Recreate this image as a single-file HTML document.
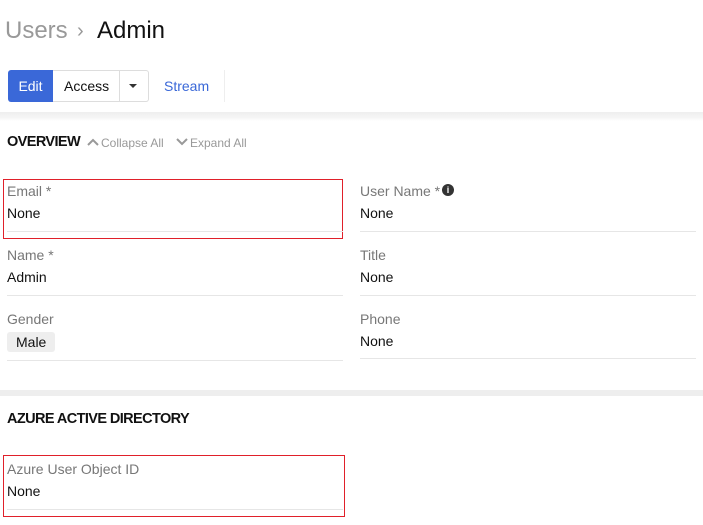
<!DOCTYPE html>
<html><head><meta charset="utf-8"><style>
*{margin:0;padding:0;box-sizing:border-box}
body{width:703px;height:525px;overflow:hidden;background:#fff;font-family:"Liberation Sans",sans-serif;position:relative;color:#111}
.a{position:absolute;white-space:nowrap}
.lbl{font-size:14px;color:#777}
.val{font-size:14px;color:#111}
.hr{position:absolute;height:1px;background:#e6e6e6}
.red{position:absolute;border:1px solid #e0202a}
.h{font-size:14px;font-weight:bold;letter-spacing:-0.6px;color:#111}
</style></head><body>
<div class="a" style="left:5px;top:17px;font-size:24px;color:#999">Users</div>
<div class="a" style="left:77px;top:20px;font-size:20px;color:#999">›</div>
<div class="a" style="left:97px;top:17px;font-size:24px;color:#111">Admin</div>

<div class="a" style="left:8px;top:70px;width:45px;height:32px;background:#3a68d8;border-radius:3px 0 0 3px;color:#fff;font-size:14px;line-height:32px;text-align:center">Edit</div>
<div class="a" style="left:53px;top:70px;width:96px;height:32px;border:1px solid #ddd;border-left:none;border-radius:0 3px 3px 0"></div>
<div class="a" style="left:119px;top:70px;width:1px;height:32px;background:#ddd"></div>
<div class="a" style="left:64px;top:70px;font-size:14px;line-height:32px">Access</div>
<div class="a" style="left:129px;top:84px;width:0;height:0;border-left:4px solid transparent;border-right:4px solid transparent;border-top:4px solid #333"></div>
<div class="a" style="left:164px;top:70px;font-size:14px;line-height:32px;color:#3a68d8">Stream</div>
<div class="a" style="left:224px;top:70px;width:1px;height:32px;background:#eee"></div>

<div class="a" style="left:0;top:112px;width:703px;height:9px;background:linear-gradient(#eee,#f5f5f5 60%,#fff)"></div>

<div class="a h" style="left:7px;top:134px;font-size:14.5px">OVERVIEW</div>
<svg class="a" style="left:87px;top:138px" width="12" height="8" viewBox="0 0 12 8"><path d="M1 7 L6 2 L11 7" fill="none" stroke="#999" stroke-width="2"/></svg>
<div class="a" style="left:101px;top:136px;font-size:12px;color:#999">Collapse All</div>
<svg class="a" style="left:176px;top:138px" width="12" height="8" viewBox="0 0 12 8"><path d="M1 1 L6 6 L11 1" fill="none" stroke="#999" stroke-width="2"/></svg>
<div class="a" style="left:190px;top:136px;font-size:12px;color:#999">Expand All</div>

<div class="red" style="left:3px;top:179px;width:340px;height:60px"></div>
<div class="a lbl" style="left:7px;top:183px">Email *</div>
<div class="a val" style="left:7px;top:205px">None</div>
<div class="hr" style="left:7px;top:231px;width:336px"></div>

<div class="a lbl" style="left:360px;top:183px">User Name *</div>
<div class="a" style="left:442px;top:184px;width:12px;height:12px;border-radius:50%;background:#333;color:#fff;font-size:9px;font-weight:bold;text-align:center;line-height:12px">i</div>
<div class="a val" style="left:360px;top:205px">None</div>
<div class="hr" style="left:360px;top:231px;width:336px"></div>

<div class="a lbl" style="left:7px;top:247px">Name *</div>
<div class="a val" style="left:7px;top:269px">Admin</div>
<div class="hr" style="left:7px;top:295px;width:336px"></div>
<div class="a lbl" style="left:360px;top:247px">Title</div>
<div class="a val" style="left:360px;top:269px">None</div>
<div class="hr" style="left:360px;top:295px;width:336px"></div>

<div class="a lbl" style="left:7px;top:311px">Gender</div>
<div class="a val" style="left:7px;top:332px;height:20px;padding:0 9px;background:#eee;border-radius:3px;line-height:20px">Male</div>
<div class="hr" style="left:7px;top:360px;width:336px"></div>
<div class="a lbl" style="left:360px;top:311px">Phone</div>
<div class="a val" style="left:360px;top:333px">None</div>
<div class="hr" style="left:360px;top:358px;width:336px"></div>

<div class="a" style="left:0;top:390px;width:703px;height:6px;background:#eee"></div>
<div class="a h" style="left:7px;top:411px;font-size:14.5px">AZURE ACTIVE DIRECTORY</div>

<div class="red" style="left:3px;top:455px;width:342px;height:62px"></div>
<div class="a lbl" style="left:7px;top:461px">Azure User Object ID</div>
<div class="a val" style="left:7px;top:483px">None</div>
<div class="hr" style="left:7px;top:509px;width:336px"></div>
</body></html>
